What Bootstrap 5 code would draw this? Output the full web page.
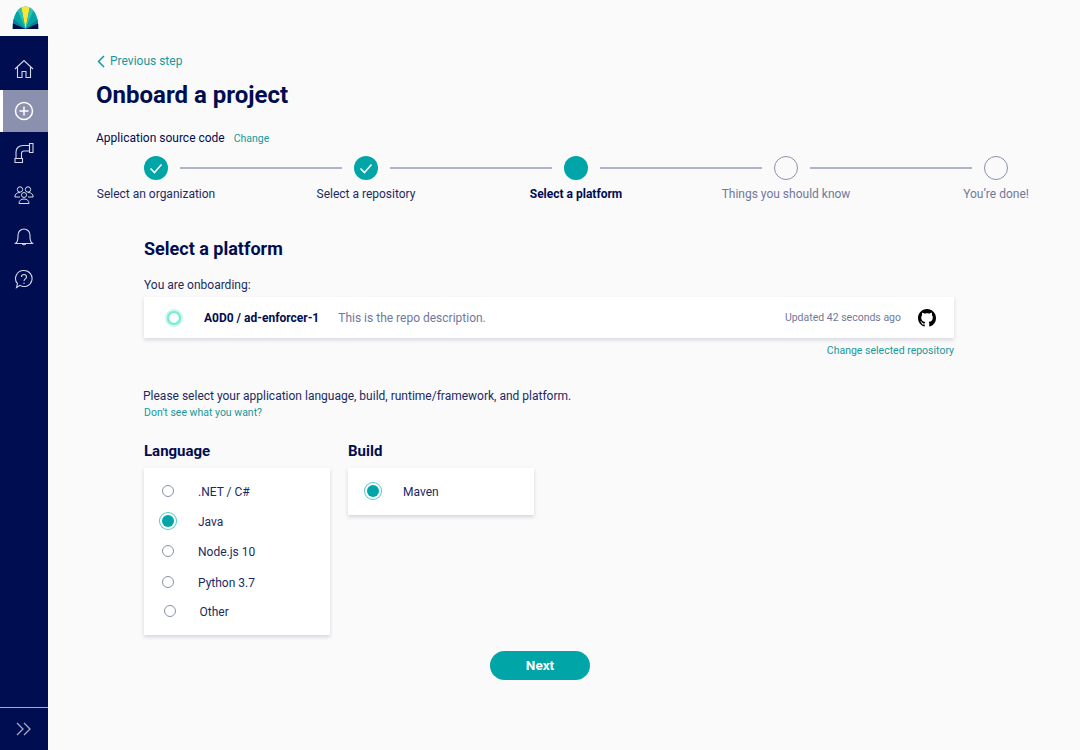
<!DOCTYPE html>
<html lang="en">
<head>
<meta charset="utf-8">
<title>Onboard a project</title>
<link href="https://cdn.jsdelivr.net/npm/bootstrap@5.3.0/dist/css/bootstrap.min.css" rel="stylesheet">
<style>
html,body{height:100%;}
body{font-family:Roboto,"Liberation Sans",sans-serif;background:#fafafa;color:#000d50;font-size:12px;overflow:hidden;}
a{text-decoration:none;color:#16989c;}
.top-strip{height:36px;padding-left:12px;padding-top:6px;background:#fafafa;}
.app-body{height:714px;}
.side-rail{width:48px;background:#000d50;flex:none;padding-top:12px;}
.rail-item{height:42px;color:#d5d8e6;}
.rail-item svg{display:block;}
.rail-active{background:#8a90ad;border-left:3px solid #fff;padding-right:3px;color:#fff;}
.rail-foot{border-top:1px solid #a6aac2;height:43px;margin-top:auto;margin-bottom:0;}
.main-pane{padding:0 24px 0 48px;width:1032px;}
.back-link{font-size:12px;margin-top:18px;height:14px;line-height:14px;padding-left:1px;}
.back-link a{gap:5px;}
.page-title{font-size:24px;font-weight:700;line-height:30px;margin:12px 0 0;color:#000d50;}
.source-line{margin-top:20px;height:16px;line-height:16px;font-size:12px;}
.source-line a{font-size:10.5px;margin-left:6px;}
.step-track{padding:0 48px;margin-top:10px;height:24px;}
.step-dot{width:24px;height:24px;border-radius:50%;flex:none;}
.dot-done{background:#00a5a8;}
.dot-todo{border:1px solid #8a90ad;}
.step-bar{flex:1 1 auto;height:2px;background:#b0b3cc;margin:0 12px;}
.step-names{margin-top:6px;height:16px;line-height:16px;}
.step-name{width:120px;display:flex;justify-content:center;white-space:nowrap;font-size:12px;color:#1b2a63;}
.name-now{font-weight:700;color:#000d50;}
.name-todo{color:#71789b;}
.content-col{margin-left:48px;width:810px;}
.platform-title{font-size:18px;font-weight:700;line-height:22px;margin:36px 0 0;}
.onboard-note{margin-top:17px;line-height:16px;height:16px;font-size:12px;color:#1b2a63;}
.repo-panel{height:41px;background:#fff;margin-top:4px;box-shadow:0 2px 4px rgba(0,13,80,.14);padding:0 18px 0 20px;}
.repo-name{font-weight:700;font-size:12px;margin-left:20px;}
.repo-desc{color:#71789b;font-size:12px;margin-left:19px;}
.repo-time{color:#71789b;font-size:10.5px;margin-right:17px;}
.repo-change{font-size:10.5px;line-height:12px;margin-top:7px;}
.select-note{margin-top:31px;margin-left:-1px;line-height:16px;font-size:12px;color:#1b2a63;}
.missing-link{font-size:10.5px;line-height:12px;margin-top:3px;}
.group-title{font-size:15px;font-weight:700;line-height:20px;margin-bottom:7px;}
.choice-groups{margin-top:22px;gap:18px;}
.choice-col{width:186px;margin-left:0;}
.choice-panel{background:#fff;box-shadow:0 2px 4px rgba(0,13,80,.16);}
.panel-lang{height:167px;padding-top:8px;}
.panel-build{height:47px;padding-top:8px;}
.choice-row{height:30px;padding-left:18px;font-size:12px;color:#1b2a63;}
.panel-build .choice-row{padding-left:19px;}
.choice-row .form-check-input{width:12px;height:12px;margin:0;flex:none;border:1px solid #8a90ad;background:#fff;}
.choice-row .form-check-input:checked{width:12px;height:12px;background:#00a5a8;background-image:none;border:0;box-shadow:0 0 0 2px #fff,0 0 0 3px #53c8ca;}
.choice-row label{margin-left:24px;padding-top:1px;}
.row-python{padding-top:2px;}
.row-other{padding-left:19.5px;}
.next-wrap{padding-left:346px;margin-top:16px;}
.next-btn{width:100px;height:29px;border-radius:15px;background:#00a5a8;border:0;color:#fff;font-weight:700;font-size:13.5px;padding:0;}
.next-btn:hover{background:#00a5a8;color:#fff;}
</style>
</head>
<body>
<div class="top-strip">
  <svg width="27" height="24" viewBox="0 0 27 24">
    <defs><clipPath id="domeclip"><path d="M.8 23C.3 9 6 .5 13.5.5S26.7 9 26.2 23z"/></clipPath></defs>
    <g clip-path="url(#domeclip)">
      <rect width="27" height="24" fill="#00a5a8"/>
      <path d="M13.5 23L0 12V24H27V12z" fill="#0a7f93"/>
      <path d="M13.5 23L0 17V24H27V17z" fill="#000d50"/>
      <path d="M13.5 23L9 0H18z" fill="#fde62f"/>
      <path d="M13.5 23L5 3L9 0z" fill="#2fc0b4"/>
      <path d="M13.5 23L22 3L18 0z" fill="#2fc0b4"/>
    </g>
  </svg>
</div>
<div class="app-body d-flex">
  <nav class="side-rail d-flex flex-column">
    <div class="rail-item d-flex align-items-center justify-content-center">
      <svg width="20" height="20" viewBox="0 0 20 20" fill="none" stroke="currentColor" stroke-width="1.1"><path d="M1 10L10 1.5 19 10M3.5 8v10.5H8V12.5h4v6h4.5V8"/></svg>
    </div>
    <div class="rail-item rail-active d-flex align-items-center justify-content-center">
      <svg width="20" height="20" viewBox="0 0 20 20" fill="none" stroke="currentColor" stroke-width="1.5"><circle cx="10" cy="10" r="8.5"/><path d="M10 5.5v9M5.5 10h9"/></svg>
    </div>
    <div class="rail-item d-flex align-items-center justify-content-center">
      <svg width="20" height="22" viewBox="0 0 20 22" fill="none" stroke="currentColor" stroke-width="1.1"><path d="M2 16.500V10C2 6 5 3.500 9 3.500H15.500V9H10C8.500 9 7.500 10 7.500 11.500V16.500"/><path d="M15.500 1.500h3.500V10.500h-3.500zM1 16.500h7.500V20.500H1z"/></svg>
    </div>
    <div class="rail-item d-flex align-items-center justify-content-center">
      <svg width="20" height="20" viewBox="0 0 20 20" fill="none" stroke="currentColor" stroke-width="1"><circle cx="6" cy="4.500" r="2.700"/><circle cx="14" cy="4.500" r="2.700"/><path d="M.8 12c.2-3 2-4.500 5.200-4.500M19.200 12c-.2-3-2-4.500-5.200-4.500M.8 12H6M14 12h5.200"/><circle cx="10" cy="10" r="2.500"/><path d="M5 18.500c0-3 2-4.500 5-4.500s5 1.500 5 4.500z"/></svg>
    </div>
    <div class="rail-item d-flex align-items-center justify-content-center">
      <svg width="20" height="20" viewBox="0 0 20 20" fill="none" stroke="currentColor" stroke-width="1.1"><path d="M1.500 16.500C3.500 15 4 13 4 10V8a6 6 0 0 1 12 0v2c0 3 .5 5 2.500 6.500zM8.200 16.500a1.900 1.900 0 0 0 3.600 0"/></svg>
    </div>
    <div class="rail-item d-flex align-items-center justify-content-center">
      <svg width="20" height="20" viewBox="0 0 20 20" fill="none" stroke="currentColor" stroke-width="1.1"><path d="M10 1.500a8 8 0 1 1-4 14.900L2.500 18.500l1-3.800A8 8 0 0 1 10 1.500z"/><path d="M7.500 8c0-1.500 1.100-2.500 2.500-2.500S12.500 6.500 12.500 8c0 1.800-2.500 2-2.500 4"/><circle cx="10" cy="14.200" r=".7" fill="currentColor" stroke="none"/></svg>
    </div>
    <div class="rail-foot d-flex align-items-center justify-content-center">
      <svg width="16" height="14" viewBox="0 0 16 14" fill="none" stroke="#a6aac2" stroke-width="1.300"><path d="M1 1l6 6-6 6M8 1l6 6-6 6"/></svg>
    </div>
  </nav>
  <main class="main-pane">
    <div class="back-link">
      <a href="#" class="d-inline-flex align-items-center">
        <svg width="8" height="13" viewBox="0 0 8 13" fill="none" stroke="#16989c" stroke-width="1.500"><path d="M7 1L1.500 6.500 7 12"/></svg>
        <span>Previous step</span>
      </a>
    </div>
    <h1 class="page-title">Onboard a project</h1>
    <div class="source-line">Application source code <a href="#">Change</a></div>
    <div class="step-track d-flex align-items-center">
      <div class="step-dot dot-done d-flex align-items-center justify-content-center"><svg width="14" height="11" viewBox="0 0 14 11" fill="none" stroke="#fff" stroke-width="1.600"><path d="M1.500 5.500L5.500 9.500 12.500 1.500"/></svg></div>
      <div class="step-bar"></div>
      <div class="step-dot dot-done d-flex align-items-center justify-content-center"><svg width="14" height="11" viewBox="0 0 14 11" fill="none" stroke="#fff" stroke-width="1.600"><path d="M1.500 5.500L5.500 9.500 12.500 1.500"/></svg></div>
      <div class="step-bar"></div>
      <div class="step-dot dot-done"></div>
      <div class="step-bar"></div>
      <div class="step-dot dot-todo"></div>
      <div class="step-bar"></div>
      <div class="step-dot dot-todo"></div>
    </div>
    <div class="step-names d-flex justify-content-between">
      <div class="step-name">Select an organization</div>
      <div class="step-name">Select a repository</div>
      <div class="step-name name-now">Select a platform</div>
      <div class="step-name name-todo">Things you should know</div>
      <div class="step-name name-todo">You’re done!</div>
    </div>
    <div class="content-col">
      <h2 class="platform-title">Select a platform</h2>
      <div class="onboard-note">You are onboarding:</div>
      <div class="repo-panel d-flex align-items-center">
        <svg width="20" height="20" viewBox="0 0 20 20" fill="none"><circle cx="10" cy="10" r="7" stroke="#c9f7ec" stroke-width="4"/><circle cx="10" cy="10" r="6" stroke="#73eed2" stroke-width="2.200"/></svg>
        <span class="repo-name">A0D0 / ad-enforcer-1</span>
        <span class="repo-desc">This is the repo description.</span>
        <span class="repo-time ms-auto">Updated 42 seconds ago</span>
        <svg width="18" height="18" viewBox="0 0 16 16" fill="#000"><path d="M8 0C3.58 0 0 3.58 0 8c0 3.54 2.290 6.530 5.470 7.590.4.070.55-.17.55-.38 0-.19-.01-.82-.01-1.490-2.010.37-2.530-.49-2.690-.94-.09-.23-.48-.94-.82-1.130-.28-.15-.68-.52-.01-.53.63-.01 1.080.58 1.230.82.72 1.210 1.870.87 2.330.66.070-.52.28-.87.51-1.070-1.780-.2-3.640-.89-3.640-3.950 0-.87.31-1.590.82-2.150-.08-.2-.36-1.020.08-2.120 0 0 .67-.21 2.200.82.64-.18 1.320-.27 2-.27.68 0 1.360.09 2 .27 1.530-1.040 2.200-.82 2.200-.82.44 1.100.16 1.920.08 2.120.51.56.82 1.270.82 2.150 0 3.070-1.870 3.750-3.650 3.950.29.25.54.73.54 1.480 0 1.070-.01 1.930-.01 2.200 0 .21.15.46.55.38A8.012 8.012 0 0 0 16 8c0-4.420-3.580-8-8-8z"/></svg>
      </div>
      <div class="repo-change text-end"><a href="#">Change selected repository</a></div>
      <div class="select-note">Please select your application language, build, runtime/framework, and platform.</div>
      <div class="missing-link"><a href="#">Don’t see what you want?</a></div>
      <div class="choice-groups d-flex">
        <div class="choice-col">
          <div class="group-title">Language</div>
          <div class="choice-panel panel-lang">
            <div class="choice-row d-flex align-items-center"><input class="form-check-input" type="radio" name="lang" id="l1"><label for="l1">.NET / C#</label></div>
            <div class="choice-row d-flex align-items-center"><input class="form-check-input" type="radio" name="lang" id="l2" checked><label for="l2">Java</label></div>
            <div class="choice-row d-flex align-items-center"><input class="form-check-input" type="radio" name="lang" id="l3"><label for="l3">Node.js 10</label></div>
            <div class="choice-row row-python d-flex align-items-center"><input class="form-check-input" type="radio" name="lang" id="l4"><label for="l4">Python 3.7</label></div>
            <div class="choice-row row-other d-flex align-items-center"><input class="form-check-input" type="radio" name="lang" id="l5"><label for="l5">Other</label></div>
          </div>
        </div>
        <div class="choice-col">
          <div class="group-title">Build</div>
          <div class="choice-panel panel-build">
            <div class="choice-row d-flex align-items-center"><input class="form-check-input" type="radio" name="build" id="b1" checked><label for="b1">Maven</label></div>
          </div>
        </div>
      </div>
      <div class="next-wrap"><button type="button" class="btn next-btn">Next</button></div>
    </div>
  </main>
</div>
<script src="https://cdn.jsdelivr.net/npm/bootstrap@5.3.0/dist/js/bootstrap.bundle.min.js"></script>
</body>
</html>
